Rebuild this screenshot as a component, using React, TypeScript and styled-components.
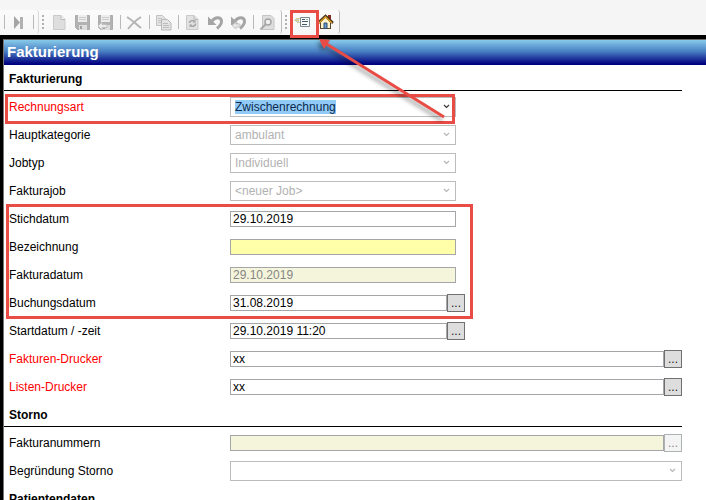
import React from "react";
import styled, { createGlobalStyle, css } from "styled-components";

const GlobalStyle = createGlobalStyle`
  * { box-sizing: border-box; }
  body {
    margin: 0;
    background: #fff;
    color: #000;
    font: 12px/16px "Liberation Sans", Arial, sans-serif;
  }
`;

const RED = "#e94b45";

const Page = styled.div`
  position: relative;
  height: 100vh;
  overflow: hidden;
  display: flex;
  flex-direction: column;
`;

const Toolbar = styled.header`
  display: flex;
  align-items: flex-end;
  height: 35px;
  flex: none;
  padding-bottom: 1px;
  background: #f5f5f5;
`;

const ToolGroup = styled.div<{ $first?: boolean }>`
  display: flex;
  align-items: center;
  height: 24px;
  padding: 0 2px 0 ${(p) => (p.$first ? 1 : 3)}px;
  border-right: 1px solid ${(p) => (p.$first ? "#d8d8d8" : "#bdbdbd")};
  border-radius: 0 3px 3px 0;
  background: linear-gradient(#fbfbfb, #f6f6f6);
`;

const ToolButton = styled.button`
  display: flex;
  align-items: center;
  justify-content: center;
  width: 23px;
  height: 22px;
  padding: 0;
  border: 0;
  background: none;
`;

const Divider = styled.span`
  width: 6px;
  height: 14px;
  display: flex;
  justify-content: center;
  &::before {
    content: "";
    width: 1px;
    background: #b9b9b9;
  }
`;

const Grip = styled.span`
  width: 2px;
  height: 14px;
  margin-right: 4px;
  background: repeating-linear-gradient(#b0b0b0 0 2px, transparent 2px 4px);
`;

const Frame = styled.main`
  flex: 1;
  min-height: 0;
  border-top: 4px solid #000;
  border-left: 3px solid #000;
`;

const Content = styled.div`
  border-top: 1px solid #666;
  border-left: 1px solid #777;
  height: 100%;
`;

const Title = styled.h1`
  margin: 0;
  padding: 0 3px 2px;
  font-size: 15px;
  line-height: 23px;
  color: #fff;
  background: linear-gradient(#87cbea, #4a80c4 45%, #00007f 96%);
`;

const Form = styled.form`
  padding-right: 24px;
`;

const SectionTitle = styled.h2`
  margin: 0 0 2px;
  height: 26px;
  padding: 1px 5px 0;
  border-bottom: 1px solid #000;
  font-size: 12px;
  line-height: 27px;
`;

const Row = styled.div`
  display: flex;
  align-items: center;
  height: 28px;
`;

const Label = styled.label<{ $required?: boolean }>`
  flex: none;
  width: 226px;
  padding-left: 5px;
  color: ${(p) => (p.$required ? "#f00" : "#000")};
`;

const Field = styled.div<{ $wide?: boolean; $lookup?: boolean }>`
  position: relative;
  display: flex;
  align-items: center;
  ${(p) =>
    p.$wide
      ? css`flex: 1;`
      : css`width: ${p.$lookup ? 235 : 226}px;`}
`;

const TextBox = styled.input<{ $tone?: "yellow" | "muted" }>`
  flex: 1;
  min-width: 0;
  height: 16px;
  padding: 0 2px;
  border: 1px solid #a5a6aa;
  border-radius: 0;
  outline: 0;
  font: inherit;
  color: #000;
  background: ${(p) =>
    p.$tone === "yellow" ? "#ffffaa" : p.$tone === "muted" ? "#f5f5dc" : "#fff"};
  &:disabled { color: #858585; }
`;

const LookupButton = styled.button`
  width: 18px;
  height: 18px;
  padding: 0;
  border: 1px solid #707070;
  font: inherit;
  line-height: 16px;
  text-align: center;
  color: #222;
  background: #ddd;
  &:disabled { color: #888; border-color: #adb2b5; background: #f4f4f4; }
`;

const Drop = styled.select<{ $marked?: boolean }>`
  appearance: none;
  width: 100%;
  height: 20px;
  padding: 0 18px 0 4px;
  border: 1px solid #bcbcbc;
  border-radius: 0;
  outline: 0;
  font: inherit;
  color: #0b2a4c;
  background: ${(p) =>
    p.$marked
      ? "linear-gradient(#91c9f7, #91c9f7) 4px 2px / 101px 14px no-repeat #fff"
      : "#fff"};
  &:disabled { color: #b2b2b2; opacity: 1; }
`;

const Chevron = styled.svg<{ $active?: boolean }>`
  position: absolute;
  right: 6px;
  top: 7px;
  width: 7px;
  height: 5px;
  pointer-events: none;
  fill: none;
  stroke: ${(p) => (p.$active ? "#333" : "#b4b4b4")};
  stroke-width: 1.1;
`;

const Mark = styled.div<{ $x: number; $y: number; $w: number; $h: number }>`
  position: absolute;
  left: ${(p) => p.$x}px;
  top: ${(p) => p.$y}px;
  width: ${(p) => p.$w}px;
  height: ${(p) => p.$h}px;
  border: 3px solid ${RED};
  pointer-events: none;
`;

const Arrow = styled.svg`
  position: absolute;
  left: 315px;
  top: 35px;
  width: 140px;
  height: 90px;
  pointer-events: none;
  filter: drop-shadow(-2px 3px 2px rgba(0, 0, 0, 0.4));
`;

const Icon = ({ children }: { children: React.ReactNode }) => (
  <svg width="17" height="17" viewBox="0 0 17 17" fill="none" aria-hidden="true">
    {children}
  </svg>
);

const SkipIcon = () => (
  <Icon>
    <path d="M4 2v13l6-6.500z" fill="#a5a5a5" />
    <path d="M10 3h3v12h-3z" fill="#b0b0b0" />
  </Icon>
);

const sheet = "M2.500 1.500h7.500l4 4v10H2.500z";

const NewIcon = () => (
  <Icon>
    <path d={sheet} fill="#dedede" stroke="#cacaca" />
    <path d="M10 1.500v4h4" fill="#f4f4f4" stroke="#bcbcbc" />
  </Icon>
);

const Disk = () => (
  <>
    <path d="M1.500 1.500h14v14h-12l-2-2z" fill="#b2b2b2" stroke="#acacac" />
    <path d="M4 1h9v7H4z" fill="#ededed" />
    <path d="M5 3.500h7M5 5.500h7" stroke="#cdcdcd" />
    <path d="M5 11h8v5H5z" fill="#dedede" />
    <path d="M6 12h2v3H6z" fill="#a2a2a2" />
  </>
);

const SaveIcon = () => <Icon><Disk /></Icon>;

const SaveBackIcon = () => (
  <Icon>
    <Disk />
    <path d="M1 12l4-4v2.500h5v3H5V16z" fill="#ececec" stroke="#c0c0c0" />
  </Icon>
);

const DeleteIcon = () => (
  <Icon>
    <path d="M1 3c5 3 9 7 14 11M15 3C10 6 6 10 2 15" stroke="#b4b4b4" strokeWidth="2" />
  </Icon>
);

const CopyIcon = () => (
  <Icon>
    <path d="M1.500 1.500h6l3 3v7h-9z" fill="#e4e4e4" stroke="#c2c2c2" />
    <path d="M3 4.500h4M3 6.500h4M3 8.500h4" stroke="#c4c4c4" />
    <path d="M6.500 5.500h6l3.500 3.500v7H6.500z" fill="#e4e4e4" stroke="#b9b9b9" />
    <path d="M8 9.500h5M8 11.500h6M8 13.500h6" stroke="#bdbdbd" />
  </Icon>
);

const ReloadIcon = () => (
  <Icon>
    <path d={sheet} fill="#e2e2e2" stroke="#cacaca" />
    <path d="M10 1.500v4h4" stroke="#bcbcbc" />
    <path d="M5.500 9a3 2.500 0 0 1 4.500-2M11.500 9.500a3 2.500 0 0 1-4.500 2.500" stroke="#a0a0a0" strokeWidth="1.400" />
    <path d="M8.500 8.500h3v-3zM8.500 10.500h-3v3z" fill="#a0a0a0" />
  </Icon>
);

const UndoShape = () => (
  <>
    <path d="M5 7c3-4 9-4.500 9.500 0 .3 3-1.500 5-4.500 7.500" stroke="#a5a5a5" strokeWidth="3" />
    <path d="M1 2.500V11h8.500z" fill="#a5a5a5" />
  </>
);

const UndoIcon = () => <Icon><UndoShape /></Icon>;

const UndoBackIcon = () => (
  <Icon>
    <UndoShape />
    <path d="M2 11.500l4-3.500v2h4v3H6v2z" fill="#e6e6e6" stroke="#c6c6c6" />
  </Icon>
);

const FindIcon = () => (
  <Icon>
    <path d="M3.500 1.500H12l3 3v11H3.500z" fill="#dedede" stroke="#c4c4c4" />
    <circle cx="9" cy="8" r="3" fill="#efefef" stroke="#a4a4a4" strokeWidth="1.500" />
    <path d="M6.500 10.500L1.500 15.500" stroke="#a8a8a8" strokeWidth="2" />
  </Icon>
);

const SendListIcon = () => (
  <Icon>
    <path d="M2 4.500h5M0 6.500h5M3 8.500h3" stroke="#d6cf86" />
    <path d="M1 5.500h4M2 7.500h3" stroke="#c3c9cc" />
    <path d="M6.500 3.500h9v9h-9z" fill="#f7fafb" stroke="#7d8792" />
    <path d="M8 5.500h3M8 7.500h6M8 10.500h5" stroke="#4b5967" />
    <path d="M12 5.500h2" stroke="#9caf99" />
  </Icon>
);

const HomeIcon = () => (
  <Icon>
    <path d="M11 1h3v6l-3-3z" fill="#8c281d" />
    <path d="M3.500 8.500l5-5 5 5v6h-10z" fill="#fff3cd" stroke="#55452a" />
    <path d="M1 9l7.500-7L16 9" stroke="#4e3518" strokeWidth="2.500" />
    <path d="M2 9l6.500-6L15 9" stroke="#dfa52c" strokeWidth="1.300" />
    <path d="M7 9h3v5.500H7z" fill="#6396cc" stroke="#31516f" />
    <path d="M3 14.500h4M10 14.500h4" stroke="#594a32" />
  </Icon>
);

type Tool = [string, () => React.JSX.Element] | null;

const editTools: Tool[] = [
  ["Neu", NewIcon],
  ["Speichern", SaveIcon],
  ["Speichern und zurück", SaveBackIcon],
  null,
  ["Löschen", DeleteIcon],
  null,
  ["Kopieren", CopyIcon],
  null,
  ["Aktualisieren", ReloadIcon],
  ["Rückgängig", UndoIcon],
  ["Verwerfen und zurück", UndoBackIcon],
  null,
  ["Suchen", FindIcon],
];

const Tools = ({ items, disabled }: { items: Tool[]; disabled?: boolean }) => (
  <>
    {items.map((tool, i) => {
      if (!tool) return <Divider key={i} />;
      const [name, Glyph] = tool;
      return (
        <ToolButton key={name} type="button" aria-label={name} disabled={disabled}>
          <Glyph />
        </ToolButton>
      );
    })}
  </>
);

type RowProps = {
  id: string;
  label: string;
  value?: string;
  required?: boolean;
  wide?: boolean;
  disabled?: boolean;
};

const SelectRow = ({ id, label, value = "", required, wide, disabled, marked }: RowProps & { marked?: boolean }) => (
  <Row>
    <Label htmlFor={id} $required={required}>{label}</Label>
    <Field $wide={wide}>
      <Drop id={id} disabled={disabled} $marked={marked} defaultValue={value}>
        <option value={value}>{value}</option>
      </Drop>
      <Chevron viewBox="0 0 7 5" $active={marked} aria-hidden="true">
        <path d="M1 1l2.500 2.500L6 1" />
      </Chevron>
    </Field>
  </Row>
);

const TextRow = ({
  id, label, value = "", required, wide, disabled, tone, lookup,
}: RowProps & { tone?: "yellow" | "muted"; lookup?: boolean }) => (
  <Row>
    <Label htmlFor={id} $required={required}>{label}</Label>
    <Field $wide={wide} $lookup={lookup}>
      <TextBox id={id} type="text" defaultValue={value} disabled={disabled} $tone={tone} />
      {lookup && (
        <LookupButton type="button" aria-label={`${label} auswählen`} disabled={disabled}>...</LookupButton>
      )}
    </Field>
  </Row>
);

export default function App() {
  return (
    <Page>
      <GlobalStyle />
      <Toolbar>
        <ToolGroup $first>
          <Divider />
          <Tools items={[["Letzter Datensatz", SkipIcon]]} disabled />
          <Divider />
        </ToolGroup>
        <ToolGroup>
          <Grip />
          <Tools items={editTools} disabled />
        </ToolGroup>
        <ToolGroup>
          <Grip />
          <Tools items={[["Liste senden", SendListIcon], ["Startseite", HomeIcon]]} />
        </ToolGroup>
      </Toolbar>
      <Frame>
        <Content>
          <Title>Fakturierung</Title>
          <Form>
            <SectionTitle>Fakturierung</SectionTitle>
            <SelectRow id="art" label="Rechnungsart" value="Zwischenrechnung" required marked />
            <SelectRow id="kategorie" label="Hauptkategorie" value="ambulant" disabled />
            <SelectRow id="jobtyp" label="Jobtyp" value="Individuell" disabled />
            <SelectRow id="job" label="Fakturajob" value="<neuer Job>" disabled />
            <TextRow id="stichdatum" label="Stichdatum" value="29.10.2019" />
            <TextRow id="bezeichnung" label="Bezeichnung" tone="yellow" />
            <TextRow id="fakturadatum" label="Fakturadatum" value="29.10.2019" tone="muted" disabled />
            <TextRow id="buchungsdatum" label="Buchungsdatum" value="31.08.2019" lookup />
            <TextRow id="start" label="Startdatum / -zeit" value="29.10.2019 11:20" lookup />
            <TextRow id="fdrucker" label="Fakturen-Drucker" value="xx" required wide lookup />
            <TextRow id="ldrucker" label="Listen-Drucker" value="xx" required wide lookup />
            <SectionTitle>Storno</SectionTitle>
            <TextRow id="nummern" label="Fakturanummern" tone="muted" wide lookup disabled />
            <SelectRow id="grund" label="Begründung Storno" wide disabled />
            <SectionTitle>Patientendaten</SectionTitle>
          </Form>
        </Content>
      </Frame>
      <Mark $x={290} $y={10} $w={29} $h={28} />
      <Mark $x={5} $y={94} $w={450} $h={30} />
      <Mark $x={6} $y={204} $w={467} $h={115} />
      <Arrow viewBox="0 0 140 90" aria-hidden="true">
        <path d="M10 8L129 82" stroke={RED} strokeWidth="3" fill="none" />
        <path d="M4 4l11 1-6 9z" fill={RED} />
      </Arrow>
    </Page>
  );
}
